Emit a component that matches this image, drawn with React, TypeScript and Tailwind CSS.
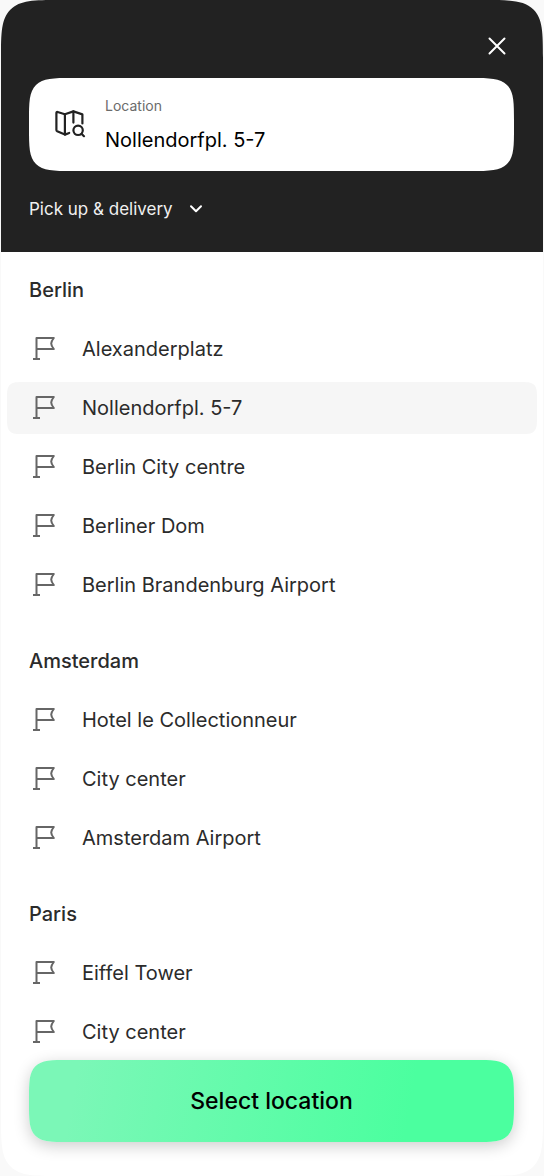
import { useState } from "react";

const cities = [
  {
    name: "Berlin",
    places: [
      "Alexanderplatz",
      "Nollendorfpl. 5-7",
      "Berlin City centre",
      "Berliner Dom",
      "Berlin Brandenburg Airport",
    ],
  },
  {
    name: "Amsterdam",
    places: ["Hotel le Collectionneur", "City center", "Amsterdam Airport"],
  },
  {
    name: "Paris",
    places: ["Eiffel Tower", "City center"],
  },
];

function CloseIcon() {
  return (
    <svg width="18" height="18" viewBox="0 0 18 18" fill="none" stroke="currentColor" strokeWidth="2" strokeLinecap="round">
      <path d="M1.5 1.5l15 15M16.5 1.5l-15 15" />
    </svg>
  );
}

function MapSearchIcon() {
  return (
    <svg
      width="32"
      height="30"
      viewBox="0 0 32 30"
      fill="none"
      stroke="currentColor"
      strokeWidth="2.2"
      strokeLinecap="round"
      strokeLinejoin="round"
    >
      <path d="M28.4 13.5V4.4L19.4 1.4L10.9 4.2L3.6 2Q2.4 1.7 2.4 3V20Q2.4 20.9 3.2 21.3L10.9 24.6L15.2 23" />
      <path d="M10.9 4.2V24.6M19.4 1.4V12.6" />
      <circle cx="24.1" cy="20.3" r="4.7" />
      <path d="M27.5 23.7L30 26.2" />
    </svg>
  );
}

function ChevronIcon() {
  return (
    <svg width="14" height="10" viewBox="0 0 14 10" fill="none" stroke="currentColor" strokeWidth="2" strokeLinecap="round" strokeLinejoin="round">
      <path d="M2 2.2L7 7.2L12 2.2" />
    </svg>
  );
}

function FlagIcon() {
  return (
    <svg width="22" height="24" viewBox="0 0 22 24" fill="none" stroke="currentColor" strokeWidth="2" strokeLinejoin="round">
      <path d="M0 22H7M3.5 22V1H20.8Q18.2 4.4 18.2 6.5T20.8 12H3.5" />
    </svg>
  );
}

export default function App() {
  const [selected, setSelected] = useState("Berlin/Nollendorfpl. 5-7");
  const place = selected.split("/")[1];

  return (
    <div className="bg-[#f9f9f9] font-['Inter',sans-serif]">
      <main className="mx-px overflow-hidden rounded-[60px] bg-white [corner-shape:squircle]">
        <header className="bg-[#222222] pt-[31px] pr-[29px] pb-[29px] pl-7 text-white">
          <div className="flex justify-end pr-0.5">
            <button type="button" aria-label="Close" className="p-1.5">
              <CloseIcon />
            </button>
          </div>

          <div className="mt-[17px] flex h-[93px] items-center rounded-[44px] bg-white pr-6 pl-[25px] text-[#222222] [corner-shape:squircle]">
            <MapSearchIcon />
            <div className="ml-[19px] flex min-w-0 flex-1 flex-col gap-2.5">
              <label htmlFor="location" className="text-sm leading-5 text-[#6b6b6b]">
                Location
              </label>
              <input
                id="location"
                value={place}
                readOnly
                className="w-full bg-transparent text-xl leading-7 text-black outline-none"
              />
            </div>
          </div>

          <div className="mt-6 flex items-center">
            <select
              aria-label="Service"
              className="appearance-none bg-transparent text-[17px] leading-7 text-[#f0f0f0] outline-none [field-sizing:content]"
            >
              <option>Pick up &amp; delivery</option>
            </select>
            <span className="pointer-events-none ml-4">
              <ChevronIcon />
            </span>
          </div>
        </header>

        <div className="flex flex-col gap-9 px-1.5 pt-6">
          {cities.map((city) => (
            <section key={city.name}>
              <h2 className="px-[22px] text-xl leading-7 font-medium text-[#2b2b2b]">{city.name}</h2>
              <ul className="mt-[19px] flex flex-col gap-[7px]">
                {city.places.map((name) => {
                  const id = `${city.name}/${name}`;

                  return (
                    <li key={id}>
                      <button
                        type="button"
                        onClick={() => setSelected(id)}
                        className={`flex h-[52px] w-full items-center gap-[27px] rounded-[18px] pl-[26px] text-left text-xl text-[#2b2b2b] [corner-shape:squircle] ${
                          id === selected ? "bg-[#f6f6f6]" : ""
                        }`}
                      >
                        <span className="text-[#666666]">
                          <FlagIcon />
                        </span>
                        {name}
                      </button>
                    </li>
                  );
                })}
              </ul>
            </section>
          ))}
        </div>

        <footer className="pt-0.5 pr-[29px] pb-[34px] pl-7">
          <button
            type="button"
            className="h-[82px] w-full rounded-[40px] bg-linear-[100deg,#7bf7b7_10%,#4bff9f_78%] text-[23px] font-medium text-black shadow-[0_4px_16px_rgba(0,0,0,0.2)] [corner-shape:squircle]"
          >
            Select location
          </button>
        </footer>
      </main>
    </div>
  );
}
